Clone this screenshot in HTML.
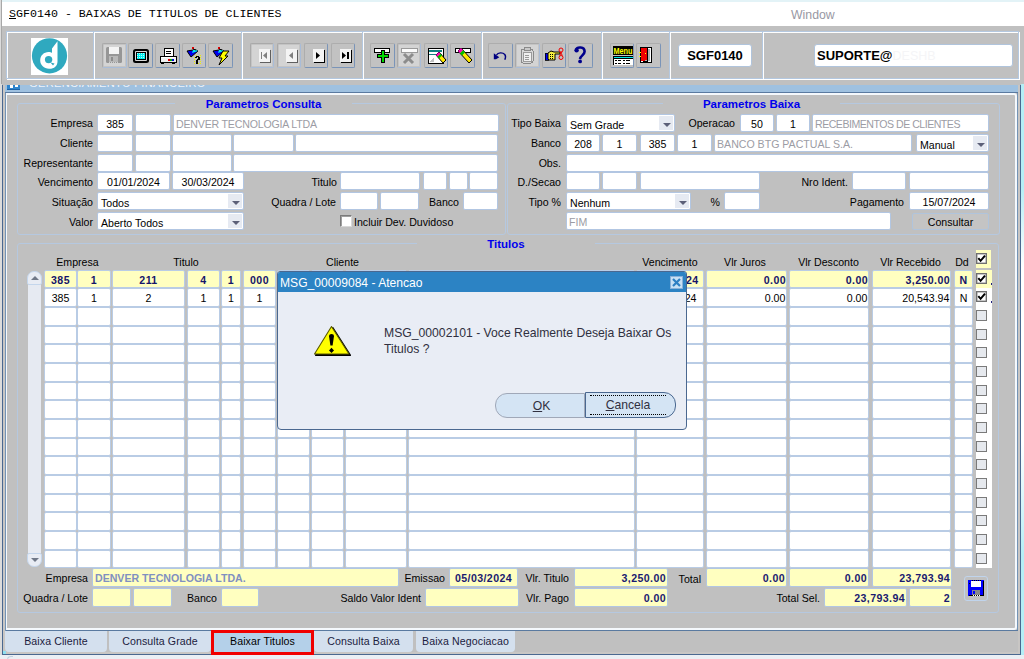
<!DOCTYPE html><html><head><meta charset="utf-8"><style>
*{margin:0;padding:0;box-sizing:border-box}
html,body{width:1024px;height:659px;overflow:hidden;background:#c0c0c0;font-family:"Liberation Sans", sans-serif;}
div{position:absolute;white-space:nowrap;}
.f{background:#fff;border:1px solid #b2c6e2;border-radius:2px;font-size:10.6px;line-height:16px;padding-top:1px;color:#000;overflow:hidden}
.fy{background:#ffffc0;border:1px solid #b2c6e2;border-radius:2px;font-size:10.6px;line-height:16px;padding-top:1px;color:#1a1a70;font-weight:bold;overflow:hidden;letter-spacing:0.4px}
.l{font-size:10.6px;line-height:16px;color:#000;text-align:right}
.g{border:1px solid #b5c8e0;border-radius:3px}
.gt{font-size:11.5px;font-weight:bold;color:#0000ee;line-height:14px;background:#c0c0c0;text-align:center}
.c{text-align:center}
.r{text-align:right}
.dd{background:#e6eaf2;}
.dd:after{content:"";position:absolute;left:4px;top:7px;border-left:4px solid transparent;border-right:4px solid transparent;border-top:4px solid #5c6078}
.tb{border:1px solid #a9bbd3;border-radius:2px;background:#c4c4c4}
.gc{background:#fff;border:1px solid #b9cce5;border-radius:2px;font-size:10.6px;line-height:16px;padding-top:1px;overflow:hidden}
.gy{background:#ffffc0;border:1px solid #b9cce5;border-radius:2px;font-size:10.6px;line-height:16px;padding-top:1px;overflow:hidden;font-weight:bold;color:#14146a;letter-spacing:0.4px}
.hd{font-size:10.6px;line-height:14px;color:#000;text-align:center}
.cb{width:11px;height:11px;border:1px solid #707070;box-shadow:inset 0 0 0 0.5px #909090;background:#fff}
.cb0{width:11px;height:11px;border:1px solid #7a7a7a;background:#e6e9ee}
.tab{background:#d4e0ee;border-radius:0 0 4px 4px;font-size:10.6px;line-height:20px;letter-spacing:0.1px;color:#202040;text-align:center}
</style></head><body><div style="left:0px;top:0px;width:1024px;height:2px;background:#e3f3f7"></div>
<div style="left:0px;top:0px;width:2px;height:659px;background:#dcdcdc"></div>
<div style="left:1px;top:0px;width:1px;height:659px;background:#a8a8a8"></div>
<div style="left:2px;top:2px;width:1022px;height:24px;background:#fff"></div>
<div style="left:9px;top:4px;width:400px;height:20px;font-family:'Liberation Mono',monospace;font-size:11.65px;line-height:20px;color:#000"><span style="text-decoration:underline">S</span>GF0140 - BAIXAS DE TITULOS DE CLIENTES</div>
<div style="left:791px;top:6px;width:60px;height:18px;font-size:12.3px;line-height:18px;color:#9898a4">Window</div>
<div style="left:6px;top:31px;width:1013px;height:48px;border:1px solid #b4c8e0;box-shadow:inset 1px 1px 0 #fff, 1px 1px 0 #fff"></div>
<div style="left:93px;top:32px;width:1px;height:47px;background:#b4c8e0;box-shadow:1px 0 0 #fff"></div>
<div style="left:241px;top:32px;width:1px;height:47px;background:#b4c8e0;box-shadow:1px 0 0 #fff"></div>
<div style="left:362px;top:32px;width:1px;height:47px;background:#b4c8e0;box-shadow:1px 0 0 #fff"></div>
<div style="left:481px;top:32px;width:1px;height:47px;background:#b4c8e0;box-shadow:1px 0 0 #fff"></div>
<div style="left:601px;top:32px;width:1px;height:47px;background:#b4c8e0;box-shadow:1px 0 0 #fff"></div>
<div style="left:669px;top:32px;width:1px;height:47px;background:#b4c8e0;box-shadow:1px 0 0 #fff"></div>
<div style="left:762px;top:32px;width:1px;height:47px;background:#b4c8e0;box-shadow:1px 0 0 #fff"></div>
<div style="left:31px;top:38px;width:37px;height:37px;"><svg width="37" height="37" viewBox="0 0 37 37" style="position:absolute;left:0;top:0"><rect width="37" height="37" fill="#fff"/><circle cx="18.5" cy="17.8" r="17.6" fill="#2fa9bf"/>
<path d="M21 10.5 L26.5 3.2 L26.5 23.5 C26.5 28 23 31 18 30.8 C13 30.6 9.3 27 9.2 22.5 C9.1 17.5 13 14 17.5 14 C19 14 20.2 14.4 21 15 Z" fill="#fff"/>
<circle cx="17.6" cy="21.6" r="3.7" fill="#2fa9bf"/><path d="M19.5 24.5 L23.5 25.5 L22 27.5 Z" fill="#2fa9bf"/></svg></div>
<div style="left:102px;top:43px;width:25px;height:25px;border:1px solid #a9a9a9;border-right-color:#a8bcd8;border-bottom-color:#a8bcd8;border-radius:2px;background:#c4c4c4"><div style="left:1px;top:1px;width:21px;height:21px;background:#d4d4d4"></div><svg width="22" height="23" style="position:absolute;left:0px;top:0px" shape-rendering="crispEdges"><rect x="3" y="3" width="16" height="16" rx="1.5" fill="#969696" shape-rendering="auto"/><rect x="6" y="3" width="10" height="7" fill="#f4f4f4"/><rect x="6" y="12" width="9" height="6" fill="#b8b8b8"/><rect x="8" y="13" width="2" height="4" fill="#8c8c8c"/><path d="M6 18h1M8 18h1M10 18h1M12 18h1M14 18h1" stroke="#d0d0d0"/></svg></div>
<div style="left:128px;top:43px;width:25px;height:25px;border:1px solid #adadad;border-right-color:#7a94b8;border-bottom-color:#7a94b8;border-radius:2px;background:#c2c2c2"><svg width="22" height="23" style="position:absolute;left:0px;top:0px" shape-rendering="crispEdges"><rect x="4" y="5" width="16" height="14" rx="2.5" fill="#000" shape-rendering="auto"/><rect x="6" y="7" width="12" height="10" rx="1" fill="#d8d8d8" shape-rendering="auto"/><rect x="7" y="8" width="10" height="8" fill="#000"/><rect x="8" y="9" width="8" height="6" fill="#00f0f0"/><path d="M8 9.5h8M8 11.5h8M8 13.5h8" stroke="#c0f8f8" stroke-dasharray="1 1"/></svg></div>
<div style="left:155px;top:43px;width:25px;height:25px;border:1px solid #adadad;border-right-color:#7a94b8;border-bottom-color:#7a94b8;border-radius:2px;background:#c2c2c2"><svg width="22" height="23" style="position:absolute;left:0px;top:0px" shape-rendering="crispEdges"><rect x="8" y="4" width="9" height="8" fill="#fff" stroke="#000"/><path d="M10 7h5M10 9h5" stroke="#000"/><rect x="4" y="12" width="16" height="6" fill="#f0f0f0" stroke="#000"/><rect x="5" y="13" width="14" height="1" fill="#fff"/><rect x="12" y="15" width="2" height="2" fill="#e00000"/><rect x="14" y="15" width="2" height="2" fill="#00b000"/><rect x="16" y="15" width="2" height="2" fill="#0000e0"/><rect x="5" y="19" width="3" height="1" fill="#000"/><rect x="16" y="19" width="3" height="1" fill="#000"/></svg></div>
<div style="left:182px;top:43px;width:24px;height:25px;border:1px solid #adadad;border-right-color:#7a94b8;border-bottom-color:#7a94b8;border-radius:2px;background:#c2c2c2"><svg width="22" height="23" style="position:absolute;left:0px;top:0px" shape-rendering="crispEdges"><path d="M4 7 L6 10 L8 13 L15 7 L13 6 L10 6 Z" fill="#0000f0" stroke="#000" stroke-width="1" shape-rendering="auto"/><path d="M9 9 L15 7 L13 6 L10 6Z" fill="#00e8f0" shape-rendering="auto"/><rect x="9" y="3" width="2" height="2" fill="#e00000"/><path d="M10 5 L13 6" stroke="#000" shape-rendering="auto"/><path d="M11 13h1M13 13h1M15 13h1M17 13h1M11 15h1M17 15h1M11 17h1M17 17h1M11 19h1M13 19h1M15 19h1M17 19h1M13 11h1M17 11h1" stroke="#f0f000"/><path d="M13 12 h3 v1 h1 v3 h-2 v2 h-2 v-2 h1 v-1 h1 v-2 h-1 v1 h-2 v-1 h1z" fill="#000"/><rect x="13" y="18" width="2" height="2" fill="#000"/></svg></div>
<div style="left:208px;top:43px;width:25px;height:25px;border:1px solid #adadad;border-right-color:#7a94b8;border-bottom-color:#7a94b8;border-radius:2px;background:#c2c2c2"><svg width="22" height="23" style="position:absolute;left:0px;top:0px" shape-rendering="crispEdges"><path d="M4 7 L6 10 L8 13 L15 7 L13 6 L10 6 Z" fill="#0000f0" stroke="#000" stroke-width="1" shape-rendering="auto"/><path d="M9 9 L15 7 L13 6 L10 6Z" fill="#00e8f0" shape-rendering="auto"/><rect x="9" y="3" width="2" height="2" fill="#e00000"/><path d="M10 5 L13 6" stroke="#000" shape-rendering="auto"/><path d="M14 7 L20 7 L16 12 L19 12 L10 21 L13 14 L10 14 Z" fill="#ffff00" stroke="#000" stroke-width="1" shape-rendering="auto"/></svg></div>
<div style="left:250px;top:43px;width:24px;height:25px;border:1px solid #a9a9a9;border-right-color:#a8bcd8;border-bottom-color:#a8bcd8;border-radius:2px;background:#c4c4c4"><div style="left:1px;top:1px;width:20px;height:21px;background:#d4d4d4"></div><svg width="22" height="23" style="position:absolute;left:1px;top:0px" shape-rendering="crispEdges"><rect x="7" y="5" width="11" height="13" fill="#f4f4f4"/><rect x="18" y="6" width="1" height="13" fill="#606060"/><rect x="8" y="18" width="11" height="1" fill="#606060"/><rect x="9" y="8" width="1" height="7" fill="#808080"/><path d="M15 8 L11 11.5 L15 15Z" fill="#808080" shape-rendering="auto"/></svg></div>
<div style="left:277px;top:43px;width:24px;height:25px;border:1px solid #a9a9a9;border-right-color:#a8bcd8;border-bottom-color:#a8bcd8;border-radius:2px;background:#c4c4c4"><div style="left:1px;top:1px;width:20px;height:21px;background:#d4d4d4"></div><svg width="22" height="23" style="position:absolute;left:1px;top:0px" shape-rendering="crispEdges"><rect x="7" y="5" width="11" height="13" fill="#f4f4f4"/><rect x="18" y="6" width="1" height="13" fill="#606060"/><rect x="8" y="18" width="11" height="1" fill="#606060"/><path d="M14 8 L10 11.5 L14 15Z" fill="#808080" shape-rendering="auto"/></svg></div>
<div style="left:304px;top:43px;width:24px;height:25px;border:1px solid #adadad;border-right-color:#7a94b8;border-bottom-color:#7a94b8;border-radius:2px;background:#c2c2c2"><svg width="22" height="23" style="position:absolute;left:1px;top:0px" shape-rendering="crispEdges"><rect x="7" y="5" width="11" height="13" fill="#f4f4f4"/><rect x="18" y="6" width="1" height="13" fill="#000"/><rect x="8" y="18" width="11" height="1" fill="#000"/><path d="M10 8 L14 11.5 L10 15Z" fill="#000" shape-rendering="auto"/></svg></div>
<div style="left:331px;top:43px;width:24px;height:25px;border:1px solid #adadad;border-right-color:#7a94b8;border-bottom-color:#7a94b8;border-radius:2px;background:#c2c2c2"><svg width="22" height="23" style="position:absolute;left:1px;top:0px" shape-rendering="crispEdges"><rect x="7" y="5" width="11" height="13" fill="#f4f4f4"/><rect x="18" y="6" width="1" height="13" fill="#000"/><rect x="8" y="18" width="11" height="1" fill="#000"/><path d="M9 8 L13 11.5 L9 15Z" fill="#000" shape-rendering="auto"/><rect x="14" y="8" width="2" height="7" fill="#000"/></svg></div>
<div style="left:370px;top:43px;width:25px;height:25px;border:1px solid #adadad;border-right-color:#7a94b8;border-bottom-color:#7a94b8;border-radius:2px;background:#c2c2c2"><svg width="22" height="23" style="position:absolute;left:0px;top:0px" shape-rendering="crispEdges"><rect x="3.5" y="4.5" width="15" height="4" fill="#fff" stroke="#000"/><path d="M10 6 h3 v4 h4 v3 h-4 v5 h-3 v-5 h-4 v-3 h4z" fill="#00d800" stroke="#000"/></svg></div>
<div style="left:397px;top:43px;width:24px;height:25px;border:1px solid #a9a9a9;border-right-color:#a8bcd8;border-bottom-color:#a8bcd8;border-radius:2px;background:#c4c4c4"><div style="left:1px;top:1px;width:20px;height:21px;background:#d4d4d4"></div><svg width="22" height="23" style="position:absolute;left:0px;top:0px" shape-rendering="crispEdges"><rect x="3" y="4" width="16" height="4" fill="#fafafa" stroke="#9a9a9a"/><path d="M6 10 L15 19 M15 10 L6 19" stroke="#8c8c8c" stroke-width="3" shape-rendering="auto"/></svg></div>
<div style="left:424px;top:43px;width:24px;height:25px;border:1px solid #adadad;border-right-color:#7a94b8;border-bottom-color:#7a94b8;border-radius:2px;background:#c2c2c2"><svg width="22" height="23" style="position:absolute;left:0px;top:0px" shape-rendering="crispEdges"><rect x="3" y="4" width="15" height="15" fill="#fff" stroke="#000"/><rect x="4" y="6" width="13" height="2" fill="#108080"/><rect x="4" y="10" width="13" height="1" fill="#108080"/><path d="M4 18 L9 13 L9 18Z" fill="#c0c0c0"/><path d="M11 11 L14 8 L21 16 L18 19 Z" fill="#ffe800" stroke="#000" shape-rendering="auto"/><path d="M11 11 L14 8 L15.5 9.7 L12.5 12.7Z" fill="#ff00c0" shape-rendering="auto"/><path d="M12.5 12.7 L15.5 9.7 L17 11.4 L14 14.4Z" fill="#00c000" shape-rendering="auto"/></svg></div>
<div style="left:450px;top:43px;width:25px;height:25px;border:1px solid #adadad;border-right-color:#7a94b8;border-bottom-color:#7a94b8;border-radius:2px;background:#c2c2c2"><svg width="22" height="23" style="position:absolute;left:0px;top:0px" shape-rendering="crispEdges"><rect x="4" y="4" width="15" height="4" fill="#fff" stroke="#000"/><path d="M7 7 L10 4 L21 16 L18 19 Z" fill="#ffe800" stroke="#000" shape-rendering="auto"/><path d="M7 7 L10 4 L12 6.2 L9 9.2Z" fill="#ff00c0" shape-rendering="auto"/><path d="M9 9.2 L12 6.2 L14 8.4 L11 11.4Z" fill="#00c000" shape-rendering="auto"/></svg></div>
<div style="left:488px;top:43px;width:25px;height:25px;border:1px solid #adadad;border-right-color:#7a94b8;border-bottom-color:#7a94b8;border-radius:2px;background:#c2c2c2"><svg width="22" height="23" style="position:absolute;left:0px;top:0px" shape-rendering="crispEdges"><path d="M7.5 11 C9 8.5 13.5 8 15.8 10.5 C17 12 16.6 14 15.8 15.8" fill="none" stroke="#000080" stroke-width="1.4" shape-rendering="auto"/><path d="M4.8 9.3 L10.3 13.2 L7 15.2 L4.8 15.2 Z" fill="#000080" shape-rendering="auto"/></svg></div>
<div style="left:515px;top:43px;width:25px;height:25px;border:1px solid #a9a9a9;border-right-color:#a8bcd8;border-bottom-color:#a8bcd8;border-radius:2px;background:#c4c4c4"><div style="left:1px;top:1px;width:21px;height:21px;background:#d4d4d4"></div><svg width="22" height="23" style="position:absolute;left:0px;top:0px" shape-rendering="crispEdges"><rect x="5" y="5" width="12" height="14" rx="2" fill="#d8d8d8" stroke="#8a8a8a"/><rect x="8" y="3" width="6" height="3" fill="#c8c8c8" stroke="#8a8a8a"/><rect x="7" y="8" width="8" height="9" fill="#f0f0f0" stroke="#9a9a9a"/><path d="M9 11h4M9 13h4M9 15h4" stroke="#9a9a9a"/></svg></div>
<div style="left:542px;top:43px;width:24px;height:25px;border:1px solid #adadad;border-right-color:#7a94b8;border-bottom-color:#7a94b8;border-radius:2px;background:#c2c2c2"><svg width="22" height="23" style="position:absolute;left:0px;top:0px" shape-rendering="crispEdges"><rect x="2" y="9" width="3" height="7" fill="#0000f0" stroke="#000" stroke-width="0.8"/><path d="M5 9 L8 7 L11 8 L17 8 L17 10 L12 10 L12 16 L6 16 L5 15 Z" fill="#f8f040" stroke="#000" stroke-width="1" shape-rendering="auto"/><path d="M7 10.5h4M7 12.5h4M7 14.5h4" stroke="#000" stroke-dasharray="1 1"/><circle cx="18" cy="6" r="2" fill="none" stroke="#f00000" shape-rendering="auto"/><circle cx="18" cy="13.5" r="2" fill="none" stroke="#f00000" shape-rendering="auto"/><path d="M17 8 L19.5 11.5 M19 8 L16.5 11.5" stroke="#f00000" shape-rendering="auto"/></svg></div>
<div style="left:568px;top:43px;width:25px;height:25px;border:1px solid #adadad;border-right-color:#7a94b8;border-bottom-color:#7a94b8;border-radius:2px;background:#c2c2c2"><svg width="22" height="23" style="position:absolute;left:0px;top:0px" shape-rendering="crispEdges"><circle cx="7.6" cy="6.2" r="2.2" fill="#00008c" shape-rendering="auto"/><path d="M7.2 5.8 C8 2.6 15.6 2.4 15.6 7.6 C15.6 11 11.4 11.6 11 15" fill="none" stroke="#00008c" stroke-width="2.6" shape-rendering="auto"/><circle cx="11.1" cy="17.4" r="1.9" fill="#00008c" shape-rendering="auto"/></svg></div>
<div style="left:610px;top:43px;width:24px;height:25px;border:1px solid #adadad;border-right-color:#7a94b8;border-bottom-color:#7a94b8;border-radius:2px;background:#c2c2c2"><svg width="22" height="23" style="position:absolute;left:0px;top:0px" shape-rendering="crispEdges"><rect x="2" y="2" width="20" height="9" fill="#000"/><text x="2.5" y="9.6" font-family="Liberation Sans" font-weight="bold" font-size="9.5" fill="#ffff00" textLength="19" lengthAdjust="spacingAndGlyphs" shape-rendering="auto">Menu</text><rect x="2" y="12" width="20" height="1" fill="#000"/><rect x="3" y="13" width="19" height="1" fill="#00e8e8"/><rect x="2" y="14" width="20" height="1" fill="#000"/><rect x="3" y="15" width="19" height="6" fill="#fff"/><rect x="2" y="13" width="1" height="8" fill="#000"/><path d="M4 16.5h2M7 16.5h3M12 16.5h2M15 16.5h4M4 19.5h2M7 19.5h3M12 19.5h2M15 19.5h4" stroke="#000"/></svg></div>
<div style="left:636px;top:43px;width:25px;height:25px;border:1px solid #adadad;border-right-color:#7a94b8;border-bottom-color:#7a94b8;border-radius:2px;background:#c2c2c2"><svg width="22" height="23" style="position:absolute;left:0px;top:0px" shape-rendering="crispEdges"><rect x="3" y="3" width="12" height="16" fill="#000"/><rect x="4" y="4" width="10" height="14" fill="#fff"/><rect x="11" y="5" width="2" height="12" fill="#b0b0b0"/><rect x="6" y="16" width="7" height="1" fill="#b0b0b0"/><path d="M4 4 L10 4 L10 16 L6 17 L4 17 Z" fill="#f00000"/><rect x="10" y="4" width="1" height="13" fill="#000"/><rect x="6" y="17" width="5" height="1" fill="#000"/><rect x="2" y="8" width="2" height="1" fill="#ffff00"/><rect x="2" y="12" width="2" height="1" fill="#ffff00"/><rect x="8" y="9" width="1" height="1" fill="#ffff00"/></svg></div>
<div style="left:678px;top:44px;width:74px;height:23px;background:#fff;border:1px solid #b0c4dc;border-radius:3px;font-size:13px;font-weight:bold;line-height:21px;text-align:center;color:#000">SGF0140</div>
<div style="left:814px;top:44px;width:199px;height:23px;background:#fff;border:1px solid #b0c4dc;border-radius:3px;font-size:13px;font-weight:bold;line-height:21px;padding-left:2px;color:#000">SUPORTE@<span style="color:#f5f5f7;font-weight:normal;font-size:12.5px">DESHB</span></div>
<div style="left:3px;top:85px;width:1017px;height:7px;background:#9fc1e0;overflow:hidden"><div style="left:26px;top:-9px;font-size:11.6px;line-height:14px;color:#eef3f9;letter-spacing:0.3px;transform:scaleX(0.96);transform-origin:0 0">GERENCIAMENTO FINANCEIRO</div><div style="left:4px;top:0px;width:13px;height:5px;background:#2e84cc;border-bottom:1px solid #1c64a8"><div style="left:3px;top:0;width:3px;height:3px;background:#fff"></div><div style="left:8px;top:0;width:3px;height:2px;background:#fff"></div></div></div>
<div style="left:3px;top:92px;width:1017px;height:1px;background:#5a7aa0"></div>
<div style="left:0px;top:84px;width:2px;height:575px;background:#dcdcdc"></div>
<div style="left:2px;top:85px;width:1px;height:570px;background:#4a6890"></div>
<div style="left:3px;top:85px;width:2px;height:567px;background:#c8c6c4"></div>
<div style="left:1018px;top:85px;width:2px;height:567px;background:#c8c6c4"></div>
<div style="left:1020px;top:85px;width:1px;height:570px;background:#4a6890"></div>
<div style="left:1021px;top:84px;width:3px;height:575px;background:linear-gradient(#b4eef6 0%,#b4eef6 18%,#fff 32%,#fff 62%,#b4eef6 82%,#b4eef6 100%)"></div>
<div style="left:3px;top:652px;width:1017px;height:2px;background:#c8c6c4"></div>
<div style="left:2px;top:654px;width:1019px;height:1px;background:#4a6890"></div>
<div style="left:3px;top:651px;width:3px;height:3px;background:#90e0f0"></div>
<div style="left:0px;top:655px;width:1024px;height:4px;background:#ebeff4"></div>
<div style="left:7px;top:656px;width:6px;height:4px;border-top:1px solid #c0d0e0;border-left:1px solid #c0d0e0;border-radius:5px 0 0 0"></div>
<div style="left:5px;top:93px;width:1013px;height:538px;border:1px solid #7393b5;border-top:none"></div>
<div style="left:6px;top:93px;width:1011px;height:537px;border:2px solid #f4f8fc;border-left-width:1px;border-radius:0 3px 3px 0"></div>
<div style="left:6px;top:630px;width:1012px;height:1px;background:#5a7aa0"></div>
<div class="g" style="left:17px;top:103px;width:489px;height:132px;"></div>
<div class="gt" style="left:175px;top:97px;width:177px;height:14px;">Parametros Consulta</div>
<div class="g" style="left:507px;top:103px;width:493px;height:132px;"></div>
<div class="gt" style="left:663px;top:97px;width:177px;height:14px;">Parametros Baixa</div>
<div class="l" style="left:-57px;top:115px;width:150px;height:16px;">Empresa</div>
<div class="f" style="left:97px;top:114px;width:36px;height:18px;text-align:center;">385</div>
<div class="f" style="left:135px;top:114px;width:36px;height:18px;text-align:center;"></div>
<div class="f" style="left:173px;top:114px;width:326px;height:18px;text-align:left;padding-left:3px;color:#9c9ca4;letter-spacing:-0.19px;padding-left:2px">DENVER TECNOLOGIA LTDA</div>
<div class="l" style="left:-57px;top:135px;width:150px;height:16px;">Cliente</div>
<div class="f" style="left:97px;top:134px;width:36px;height:18px;text-align:center;"></div>
<div class="f" style="left:135px;top:134px;width:36px;height:18px;text-align:center;"></div>
<div class="f" style="left:172px;top:134px;width:60px;height:18px;text-align:center;"></div>
<div class="f" style="left:233px;top:134px;width:61px;height:18px;text-align:center;"></div>
<div class="f" style="left:295px;top:134px;width:203px;height:18px;text-align:center;"></div>
<div class="l" style="left:-57px;top:155px;width:150px;height:16px;">Representante</div>
<div class="f" style="left:97px;top:154px;width:36px;height:18px;text-align:center;"></div>
<div class="f" style="left:135px;top:154px;width:36px;height:18px;text-align:center;"></div>
<div class="f" style="left:172px;top:154px;width:60px;height:18px;text-align:center;"></div>
<div class="f" style="left:233px;top:154px;width:265px;height:18px;text-align:center;"></div>
<div class="l" style="left:-57px;top:174px;width:150px;height:16px;">Vencimento</div>
<div class="f" style="left:97px;top:172px;width:73px;height:18px;text-align:center;">01/01/2024</div>
<div class="f" style="left:172px;top:172px;width:72px;height:18px;text-align:center;">30/03/2024</div>
<div class="l" style="left:187px;top:174px;width:150px;height:16px;">Titulo</div>
<div class="f" style="left:340px;top:172px;width:80px;height:18px;text-align:center;"></div>
<div class="f" style="left:423px;top:172px;width:24px;height:18px;text-align:center;"></div>
<div class="f" style="left:449px;top:172px;width:19px;height:18px;text-align:center;"></div>
<div class="f" style="left:469px;top:172px;width:29px;height:18px;text-align:center;"></div>
<div class="l" style="left:-57px;top:194px;width:150px;height:16px;">Situação</div>
<div class="f" style="left:97px;top:192px;width:147px;height:18px;text-align:left;padding-left:3px;padding-top:2px">Todos<div class="dd" style="left:130px;top:1px;width:14px;height:14px"></div></div>
<div class="l" style="left:186px;top:194px;width:150px;height:16px;">Quadra / Lote</div>
<div class="f" style="left:340px;top:192px;width:38px;height:18px;text-align:center;"></div>
<div class="f" style="left:380px;top:192px;width:39px;height:18px;text-align:center;"></div>
<div class="l" style="left:309px;top:194px;width:150px;height:16px;">Banco</div>
<div class="f" style="left:463px;top:192px;width:35px;height:18px;text-align:center;"></div>
<div class="l" style="left:-57px;top:214px;width:150px;height:16px;">Valor</div>
<div class="f" style="left:97px;top:212px;width:147px;height:18px;text-align:left;padding-left:3px;padding-top:2px">Aberto Todos<div class="dd" style="left:130px;top:1px;width:14px;height:14px"></div></div>
<div style="left:340px;top:215px;width:12px;height:12px;background:#fff;border:1px solid #7c7c7c;border-right-color:#d8d8d8;border-bottom-color:#d8d8d8;box-shadow:inset 1px 1px 0 #a0a0a0"></div>
<div class="l" style="left:354px;top:214px;text-align:left">Incluir Dev. Duvidoso</div>
<div class="l" style="left:411px;top:115px;width:150px;height:16px;">Tipo Baixa</div>
<div class="f" style="left:566px;top:114px;width:109px;height:18px;text-align:left;padding-left:3px;padding-top:2px">Sem Grade<div class="dd" style="left:92px;top:1px;width:14px;height:14px"></div></div>
<div class="l" style="left:585px;top:115px;width:150px;height:16px;">Operacao</div>
<div class="f" style="left:740px;top:114px;width:34px;height:18px;text-align:center;">50</div>
<div class="f" style="left:776px;top:114px;width:34px;height:18px;text-align:center;">1</div>
<div class="f" style="left:812px;top:114px;width:177px;height:18px;text-align:left;padding-left:3px;color:#9c9ca4;letter-spacing:-0.5px;padding-left:2px">RECEBIMENTOS DE CLIENTES</div>
<div class="l" style="left:411px;top:135px;width:150px;height:16px;">Banco</div>
<div class="f" style="left:566px;top:134px;width:34px;height:18px;text-align:center;">208</div>
<div class="f" style="left:602px;top:134px;width:35px;height:18px;text-align:center;">1</div>
<div class="f" style="left:640px;top:134px;width:35px;height:18px;text-align:center;">385</div>
<div class="f" style="left:677px;top:134px;width:35px;height:18px;text-align:center;">1</div>
<div class="f" style="left:714px;top:134px;width:198px;height:18px;text-align:left;padding-left:3px;color:#9c9ca4;padding-left:2px">BANCO BTG PACTUAL S.A.</div>
<div class="f" style="left:916px;top:134px;width:73px;height:18px;text-align:left;padding-left:3px;padding-top:2px">Manual<div class="dd" style="left:56px;top:1px;width:14px;height:14px"></div></div>
<div class="l" style="left:411px;top:155px;width:150px;height:16px;">Obs.</div>
<div class="f" style="left:566px;top:154px;width:423px;height:18px;text-align:center;"></div>
<div class="l" style="left:411px;top:174px;width:150px;height:16px;">D./Secao</div>
<div class="f" style="left:566px;top:172px;width:34px;height:18px;text-align:center;"></div>
<div class="f" style="left:602px;top:172px;width:35px;height:18px;text-align:center;"></div>
<div class="f" style="left:640px;top:172px;width:120px;height:18px;text-align:center;"></div>
<div class="l" style="left:698px;top:174px;width:150px;height:16px;">Nro Ident.</div>
<div class="f" style="left:852px;top:172px;width:54px;height:18px;text-align:center;"></div>
<div class="f" style="left:909px;top:172px;width:80px;height:18px;text-align:center;"></div>
<div class="l" style="left:411px;top:194px;width:150px;height:16px;">Tipo %</div>
<div class="f" style="left:566px;top:192px;width:125px;height:18px;text-align:left;padding-left:3px;padding-top:2px">Nenhum<div class="dd" style="left:108px;top:1px;width:14px;height:14px"></div></div>
<div class="l" style="left:570px;top:194px;width:150px;height:16px;">%</div>
<div class="f" style="left:724px;top:192px;width:36px;height:18px;text-align:center;"></div>
<div class="l" style="left:754px;top:194px;width:150px;height:16px;">Pagamento</div>
<div class="f" style="left:909px;top:192px;width:80px;height:18px;text-align:center;">15/07/2024</div>
<div class="f" style="left:566px;top:212px;width:325px;height:18px;text-align:left;padding-left:3px;color:#9c9ca4;padding-left:2px">FIM</div>
<div class="l" style="left:912px;top:213px;width:77px;height:17px;background:#c4c4c4;border:1px solid #b0c4dc;border-radius:2px;text-align:center">Consultar</div>
<div class="g" style="left:17px;top:243px;width:982px;height:370px;"></div>
<div class="gt" style="left:417px;top:237px;width:178px;height:14px;">Titulos</div>
<div class="hd" style="left:47px;top:255px;width:61px;height:14px;">Empresa</div>
<div class="hd" style="left:164px;top:255px;width:44px;height:14px;">Titulo</div>
<div class="hd" style="left:317px;top:255px;width:51px;height:14px;">Cliente</div>
<div class="hd" style="left:632px;top:255px;width:76px;height:14px;">Vencimento</div>
<div class="hd" style="left:713px;top:255px;width:64px;height:14px;">Vlr Juros</div>
<div class="hd" style="left:787px;top:255px;width:83px;height:14px;">Vlr Desconto</div>
<div class="hd" style="left:870px;top:255px;width:81px;height:14px;">Vlr Recebido</div>
<div class="hd" style="left:946px;top:255px;width:32px;height:14px;">Dd</div>
<div class="gy" style="left:44px;top:270px;width:33px;height:18px;text-align:center">385</div>
<div class="gy" style="left:77px;top:270px;width:34px;height:18px;text-align:center">1</div>
<div class="gy" style="left:112px;top:270px;width:73px;height:18px;text-align:center">211</div>
<div class="gy" style="left:187px;top:270px;width:33px;height:18px;text-align:center">4</div>
<div class="gy" style="left:221px;top:270px;width:20px;height:18px;text-align:center">1</div>
<div class="gy" style="left:243px;top:270px;width:33px;height:18px;text-align:center">000</div>
<div class="gy" style="left:277px;top:270px;width:33px;height:18px;text-align:center"></div>
<div class="gy" style="left:311px;top:270px;width:33px;height:18px;text-align:center"></div>
<div class="gy" style="left:345px;top:270px;width:62px;height:18px;text-align:center"></div>
<div class="gy" style="left:408px;top:270px;width:227px;height:18px;text-align:left;padding-left:3px"></div>
<div class="gy" style="left:636px;top:270px;width:68px;height:18px;text-align:center">05/03/2024</div>
<div class="gy" style="left:706px;top:270px;width:81px;height:18px;text-align:right;padding-right:0;margin-right:-0.4px">0.00</div>
<div class="gy" style="left:789px;top:270px;width:80px;height:18px;text-align:right;padding-right:0;margin-right:-0.4px">0.00</div>
<div class="gy" style="left:872px;top:270px;width:79px;height:18px;text-align:right;padding-right:0;margin-right:-0.4px">3,250.00</div>
<div class="gy" style="left:954px;top:270px;width:19px;height:18px;text-align:center">N</div>
<div style="left:976px;top:270px;width:16px;height:18px;background:#ffffc0"></div>
<div class="cb" style="left:976px;top:273px;width:11px;height:11px;"><svg width="9" height="9" style="position:absolute;left:0;top:0"><path d="M1.3 4.2 L3.6 6.8 L8 1.6" fill="none" stroke="#000" stroke-width="2"/></svg></div>
<div style="left:991px;top:283px;width:1px;height:2px;background:#202080"></div>
<div class="gc" style="left:44px;top:288px;width:33px;height:19px;text-align:center">385</div>
<div class="gc" style="left:77px;top:288px;width:34px;height:19px;text-align:center">1</div>
<div class="gc" style="left:112px;top:288px;width:73px;height:19px;text-align:center">2</div>
<div class="gc" style="left:187px;top:288px;width:33px;height:19px;text-align:center">1</div>
<div class="gc" style="left:221px;top:288px;width:20px;height:19px;text-align:center">1</div>
<div class="gc" style="left:243px;top:288px;width:33px;height:19px;text-align:center">1</div>
<div class="gc" style="left:277px;top:288px;width:33px;height:19px;text-align:center"></div>
<div class="gc" style="left:311px;top:288px;width:33px;height:19px;text-align:center"></div>
<div class="gc" style="left:345px;top:288px;width:62px;height:19px;text-align:center"></div>
<div class="gc" style="left:408px;top:288px;width:227px;height:19px;text-align:left;padding-left:3px"></div>
<div class="gc" style="left:636px;top:288px;width:68px;height:19px;text-align:center">05/03/2024</div>
<div class="gc" style="left:706px;top:288px;width:81px;height:19px;text-align:right;padding-right:0.6px">0.00</div>
<div class="gc" style="left:789px;top:288px;width:80px;height:19px;text-align:right;padding-right:0.6px">0.00</div>
<div class="gc" style="left:872px;top:288px;width:79px;height:19px;text-align:right;padding-right:0.6px">20,543.94</div>
<div class="gc" style="left:954px;top:288px;width:19px;height:19px;text-align:center">N</div>
<div style="left:976px;top:288px;width:16px;height:19px;background:#fff"></div>
<div class="cb" style="left:976px;top:291px;width:11px;height:11px;"><svg width="9" height="9" style="position:absolute;left:0;top:0"><path d="M1.3 4.2 L3.6 6.8 L8 1.6" fill="none" stroke="#000" stroke-width="2"/></svg></div>
<div style="left:991px;top:301px;width:1px;height:2px;background:#202080"></div>
<div class="gc" style="left:44px;top:307px;width:33px;height:19px;text-align:center"></div>
<div class="gc" style="left:77px;top:307px;width:34px;height:19px;text-align:center"></div>
<div class="gc" style="left:112px;top:307px;width:73px;height:19px;text-align:center"></div>
<div class="gc" style="left:187px;top:307px;width:33px;height:19px;text-align:center"></div>
<div class="gc" style="left:221px;top:307px;width:20px;height:19px;text-align:center"></div>
<div class="gc" style="left:243px;top:307px;width:33px;height:19px;text-align:center"></div>
<div class="gc" style="left:277px;top:307px;width:33px;height:19px;text-align:center"></div>
<div class="gc" style="left:311px;top:307px;width:33px;height:19px;text-align:center"></div>
<div class="gc" style="left:345px;top:307px;width:62px;height:19px;text-align:center"></div>
<div class="gc" style="left:408px;top:307px;width:227px;height:19px;text-align:left;padding-left:3px"></div>
<div class="gc" style="left:636px;top:307px;width:68px;height:19px;text-align:center"></div>
<div class="gc" style="left:706px;top:307px;width:81px;height:19px;text-align:right;padding-right:0.6px"></div>
<div class="gc" style="left:789px;top:307px;width:80px;height:19px;text-align:right;padding-right:0.6px"></div>
<div class="gc" style="left:872px;top:307px;width:79px;height:19px;text-align:right;padding-right:0.6px"></div>
<div class="gc" style="left:954px;top:307px;width:19px;height:19px;text-align:center"></div>
<div style="left:976px;top:307px;width:16px;height:19px;background:#fff"></div>
<div class="cb0" style="left:976px;top:310px;width:11px;height:11px;"></div>
<div class="gc" style="left:44px;top:326px;width:33px;height:18px;text-align:center"></div>
<div class="gc" style="left:77px;top:326px;width:34px;height:18px;text-align:center"></div>
<div class="gc" style="left:112px;top:326px;width:73px;height:18px;text-align:center"></div>
<div class="gc" style="left:187px;top:326px;width:33px;height:18px;text-align:center"></div>
<div class="gc" style="left:221px;top:326px;width:20px;height:18px;text-align:center"></div>
<div class="gc" style="left:243px;top:326px;width:33px;height:18px;text-align:center"></div>
<div class="gc" style="left:277px;top:326px;width:33px;height:18px;text-align:center"></div>
<div class="gc" style="left:311px;top:326px;width:33px;height:18px;text-align:center"></div>
<div class="gc" style="left:345px;top:326px;width:62px;height:18px;text-align:center"></div>
<div class="gc" style="left:408px;top:326px;width:227px;height:18px;text-align:left;padding-left:3px"></div>
<div class="gc" style="left:636px;top:326px;width:68px;height:18px;text-align:center"></div>
<div class="gc" style="left:706px;top:326px;width:81px;height:18px;text-align:right;padding-right:0.6px"></div>
<div class="gc" style="left:789px;top:326px;width:80px;height:18px;text-align:right;padding-right:0.6px"></div>
<div class="gc" style="left:872px;top:326px;width:79px;height:18px;text-align:right;padding-right:0.6px"></div>
<div class="gc" style="left:954px;top:326px;width:19px;height:18px;text-align:center"></div>
<div style="left:976px;top:326px;width:16px;height:18px;background:#fff"></div>
<div class="cb0" style="left:976px;top:329px;width:11px;height:11px;"></div>
<div class="gc" style="left:44px;top:344px;width:33px;height:19px;text-align:center"></div>
<div class="gc" style="left:77px;top:344px;width:34px;height:19px;text-align:center"></div>
<div class="gc" style="left:112px;top:344px;width:73px;height:19px;text-align:center"></div>
<div class="gc" style="left:187px;top:344px;width:33px;height:19px;text-align:center"></div>
<div class="gc" style="left:221px;top:344px;width:20px;height:19px;text-align:center"></div>
<div class="gc" style="left:243px;top:344px;width:33px;height:19px;text-align:center"></div>
<div class="gc" style="left:277px;top:344px;width:33px;height:19px;text-align:center"></div>
<div class="gc" style="left:311px;top:344px;width:33px;height:19px;text-align:center"></div>
<div class="gc" style="left:345px;top:344px;width:62px;height:19px;text-align:center"></div>
<div class="gc" style="left:408px;top:344px;width:227px;height:19px;text-align:left;padding-left:3px"></div>
<div class="gc" style="left:636px;top:344px;width:68px;height:19px;text-align:center"></div>
<div class="gc" style="left:706px;top:344px;width:81px;height:19px;text-align:right;padding-right:0.6px"></div>
<div class="gc" style="left:789px;top:344px;width:80px;height:19px;text-align:right;padding-right:0.6px"></div>
<div class="gc" style="left:872px;top:344px;width:79px;height:19px;text-align:right;padding-right:0.6px"></div>
<div class="gc" style="left:954px;top:344px;width:19px;height:19px;text-align:center"></div>
<div style="left:976px;top:344px;width:16px;height:19px;background:#fff"></div>
<div class="cb0" style="left:976px;top:347px;width:11px;height:11px;"></div>
<div class="gc" style="left:44px;top:363px;width:33px;height:19px;text-align:center"></div>
<div class="gc" style="left:77px;top:363px;width:34px;height:19px;text-align:center"></div>
<div class="gc" style="left:112px;top:363px;width:73px;height:19px;text-align:center"></div>
<div class="gc" style="left:187px;top:363px;width:33px;height:19px;text-align:center"></div>
<div class="gc" style="left:221px;top:363px;width:20px;height:19px;text-align:center"></div>
<div class="gc" style="left:243px;top:363px;width:33px;height:19px;text-align:center"></div>
<div class="gc" style="left:277px;top:363px;width:33px;height:19px;text-align:center"></div>
<div class="gc" style="left:311px;top:363px;width:33px;height:19px;text-align:center"></div>
<div class="gc" style="left:345px;top:363px;width:62px;height:19px;text-align:center"></div>
<div class="gc" style="left:408px;top:363px;width:227px;height:19px;text-align:left;padding-left:3px"></div>
<div class="gc" style="left:636px;top:363px;width:68px;height:19px;text-align:center"></div>
<div class="gc" style="left:706px;top:363px;width:81px;height:19px;text-align:right;padding-right:0.6px"></div>
<div class="gc" style="left:789px;top:363px;width:80px;height:19px;text-align:right;padding-right:0.6px"></div>
<div class="gc" style="left:872px;top:363px;width:79px;height:19px;text-align:right;padding-right:0.6px"></div>
<div class="gc" style="left:954px;top:363px;width:19px;height:19px;text-align:center"></div>
<div style="left:976px;top:363px;width:16px;height:19px;background:#fff"></div>
<div class="cb0" style="left:976px;top:366px;width:11px;height:11px;"></div>
<div class="gc" style="left:44px;top:382px;width:33px;height:18px;text-align:center"></div>
<div class="gc" style="left:77px;top:382px;width:34px;height:18px;text-align:center"></div>
<div class="gc" style="left:112px;top:382px;width:73px;height:18px;text-align:center"></div>
<div class="gc" style="left:187px;top:382px;width:33px;height:18px;text-align:center"></div>
<div class="gc" style="left:221px;top:382px;width:20px;height:18px;text-align:center"></div>
<div class="gc" style="left:243px;top:382px;width:33px;height:18px;text-align:center"></div>
<div class="gc" style="left:277px;top:382px;width:33px;height:18px;text-align:center"></div>
<div class="gc" style="left:311px;top:382px;width:33px;height:18px;text-align:center"></div>
<div class="gc" style="left:345px;top:382px;width:62px;height:18px;text-align:center"></div>
<div class="gc" style="left:408px;top:382px;width:227px;height:18px;text-align:left;padding-left:3px"></div>
<div class="gc" style="left:636px;top:382px;width:68px;height:18px;text-align:center"></div>
<div class="gc" style="left:706px;top:382px;width:81px;height:18px;text-align:right;padding-right:0.6px"></div>
<div class="gc" style="left:789px;top:382px;width:80px;height:18px;text-align:right;padding-right:0.6px"></div>
<div class="gc" style="left:872px;top:382px;width:79px;height:18px;text-align:right;padding-right:0.6px"></div>
<div class="gc" style="left:954px;top:382px;width:19px;height:18px;text-align:center"></div>
<div style="left:976px;top:382px;width:16px;height:18px;background:#fff"></div>
<div class="cb0" style="left:976px;top:385px;width:11px;height:11px;"></div>
<div class="gc" style="left:44px;top:400px;width:33px;height:19px;text-align:center"></div>
<div class="gc" style="left:77px;top:400px;width:34px;height:19px;text-align:center"></div>
<div class="gc" style="left:112px;top:400px;width:73px;height:19px;text-align:center"></div>
<div class="gc" style="left:187px;top:400px;width:33px;height:19px;text-align:center"></div>
<div class="gc" style="left:221px;top:400px;width:20px;height:19px;text-align:center"></div>
<div class="gc" style="left:243px;top:400px;width:33px;height:19px;text-align:center"></div>
<div class="gc" style="left:277px;top:400px;width:33px;height:19px;text-align:center"></div>
<div class="gc" style="left:311px;top:400px;width:33px;height:19px;text-align:center"></div>
<div class="gc" style="left:345px;top:400px;width:62px;height:19px;text-align:center"></div>
<div class="gc" style="left:408px;top:400px;width:227px;height:19px;text-align:left;padding-left:3px"></div>
<div class="gc" style="left:636px;top:400px;width:68px;height:19px;text-align:center"></div>
<div class="gc" style="left:706px;top:400px;width:81px;height:19px;text-align:right;padding-right:0.6px"></div>
<div class="gc" style="left:789px;top:400px;width:80px;height:19px;text-align:right;padding-right:0.6px"></div>
<div class="gc" style="left:872px;top:400px;width:79px;height:19px;text-align:right;padding-right:0.6px"></div>
<div class="gc" style="left:954px;top:400px;width:19px;height:19px;text-align:center"></div>
<div style="left:976px;top:400px;width:16px;height:19px;background:#fff"></div>
<div class="cb0" style="left:976px;top:403px;width:11px;height:11px;"></div>
<div class="gc" style="left:44px;top:419px;width:33px;height:19px;text-align:center"></div>
<div class="gc" style="left:77px;top:419px;width:34px;height:19px;text-align:center"></div>
<div class="gc" style="left:112px;top:419px;width:73px;height:19px;text-align:center"></div>
<div class="gc" style="left:187px;top:419px;width:33px;height:19px;text-align:center"></div>
<div class="gc" style="left:221px;top:419px;width:20px;height:19px;text-align:center"></div>
<div class="gc" style="left:243px;top:419px;width:33px;height:19px;text-align:center"></div>
<div class="gc" style="left:277px;top:419px;width:33px;height:19px;text-align:center"></div>
<div class="gc" style="left:311px;top:419px;width:33px;height:19px;text-align:center"></div>
<div class="gc" style="left:345px;top:419px;width:62px;height:19px;text-align:center"></div>
<div class="gc" style="left:408px;top:419px;width:227px;height:19px;text-align:left;padding-left:3px"></div>
<div class="gc" style="left:636px;top:419px;width:68px;height:19px;text-align:center"></div>
<div class="gc" style="left:706px;top:419px;width:81px;height:19px;text-align:right;padding-right:0.6px"></div>
<div class="gc" style="left:789px;top:419px;width:80px;height:19px;text-align:right;padding-right:0.6px"></div>
<div class="gc" style="left:872px;top:419px;width:79px;height:19px;text-align:right;padding-right:0.6px"></div>
<div class="gc" style="left:954px;top:419px;width:19px;height:19px;text-align:center"></div>
<div style="left:976px;top:419px;width:16px;height:19px;background:#fff"></div>
<div class="cb0" style="left:976px;top:422px;width:11px;height:11px;"></div>
<div class="gc" style="left:44px;top:438px;width:33px;height:18px;text-align:center"></div>
<div class="gc" style="left:77px;top:438px;width:34px;height:18px;text-align:center"></div>
<div class="gc" style="left:112px;top:438px;width:73px;height:18px;text-align:center"></div>
<div class="gc" style="left:187px;top:438px;width:33px;height:18px;text-align:center"></div>
<div class="gc" style="left:221px;top:438px;width:20px;height:18px;text-align:center"></div>
<div class="gc" style="left:243px;top:438px;width:33px;height:18px;text-align:center"></div>
<div class="gc" style="left:277px;top:438px;width:33px;height:18px;text-align:center"></div>
<div class="gc" style="left:311px;top:438px;width:33px;height:18px;text-align:center"></div>
<div class="gc" style="left:345px;top:438px;width:62px;height:18px;text-align:center"></div>
<div class="gc" style="left:408px;top:438px;width:227px;height:18px;text-align:left;padding-left:3px"></div>
<div class="gc" style="left:636px;top:438px;width:68px;height:18px;text-align:center"></div>
<div class="gc" style="left:706px;top:438px;width:81px;height:18px;text-align:right;padding-right:0.6px"></div>
<div class="gc" style="left:789px;top:438px;width:80px;height:18px;text-align:right;padding-right:0.6px"></div>
<div class="gc" style="left:872px;top:438px;width:79px;height:18px;text-align:right;padding-right:0.6px"></div>
<div class="gc" style="left:954px;top:438px;width:19px;height:18px;text-align:center"></div>
<div style="left:976px;top:438px;width:16px;height:18px;background:#fff"></div>
<div class="cb0" style="left:976px;top:441px;width:11px;height:11px;"></div>
<div class="gc" style="left:44px;top:456px;width:33px;height:19px;text-align:center"></div>
<div class="gc" style="left:77px;top:456px;width:34px;height:19px;text-align:center"></div>
<div class="gc" style="left:112px;top:456px;width:73px;height:19px;text-align:center"></div>
<div class="gc" style="left:187px;top:456px;width:33px;height:19px;text-align:center"></div>
<div class="gc" style="left:221px;top:456px;width:20px;height:19px;text-align:center"></div>
<div class="gc" style="left:243px;top:456px;width:33px;height:19px;text-align:center"></div>
<div class="gc" style="left:277px;top:456px;width:33px;height:19px;text-align:center"></div>
<div class="gc" style="left:311px;top:456px;width:33px;height:19px;text-align:center"></div>
<div class="gc" style="left:345px;top:456px;width:62px;height:19px;text-align:center"></div>
<div class="gc" style="left:408px;top:456px;width:227px;height:19px;text-align:left;padding-left:3px"></div>
<div class="gc" style="left:636px;top:456px;width:68px;height:19px;text-align:center"></div>
<div class="gc" style="left:706px;top:456px;width:81px;height:19px;text-align:right;padding-right:0.6px"></div>
<div class="gc" style="left:789px;top:456px;width:80px;height:19px;text-align:right;padding-right:0.6px"></div>
<div class="gc" style="left:872px;top:456px;width:79px;height:19px;text-align:right;padding-right:0.6px"></div>
<div class="gc" style="left:954px;top:456px;width:19px;height:19px;text-align:center"></div>
<div style="left:976px;top:456px;width:16px;height:19px;background:#fff"></div>
<div class="cb0" style="left:976px;top:459px;width:11px;height:11px;"></div>
<div class="gc" style="left:44px;top:475px;width:33px;height:19px;text-align:center"></div>
<div class="gc" style="left:77px;top:475px;width:34px;height:19px;text-align:center"></div>
<div class="gc" style="left:112px;top:475px;width:73px;height:19px;text-align:center"></div>
<div class="gc" style="left:187px;top:475px;width:33px;height:19px;text-align:center"></div>
<div class="gc" style="left:221px;top:475px;width:20px;height:19px;text-align:center"></div>
<div class="gc" style="left:243px;top:475px;width:33px;height:19px;text-align:center"></div>
<div class="gc" style="left:277px;top:475px;width:33px;height:19px;text-align:center"></div>
<div class="gc" style="left:311px;top:475px;width:33px;height:19px;text-align:center"></div>
<div class="gc" style="left:345px;top:475px;width:62px;height:19px;text-align:center"></div>
<div class="gc" style="left:408px;top:475px;width:227px;height:19px;text-align:left;padding-left:3px"></div>
<div class="gc" style="left:636px;top:475px;width:68px;height:19px;text-align:center"></div>
<div class="gc" style="left:706px;top:475px;width:81px;height:19px;text-align:right;padding-right:0.6px"></div>
<div class="gc" style="left:789px;top:475px;width:80px;height:19px;text-align:right;padding-right:0.6px"></div>
<div class="gc" style="left:872px;top:475px;width:79px;height:19px;text-align:right;padding-right:0.6px"></div>
<div class="gc" style="left:954px;top:475px;width:19px;height:19px;text-align:center"></div>
<div style="left:976px;top:475px;width:16px;height:19px;background:#fff"></div>
<div class="cb0" style="left:976px;top:478px;width:11px;height:11px;"></div>
<div class="gc" style="left:44px;top:494px;width:33px;height:18px;text-align:center"></div>
<div class="gc" style="left:77px;top:494px;width:34px;height:18px;text-align:center"></div>
<div class="gc" style="left:112px;top:494px;width:73px;height:18px;text-align:center"></div>
<div class="gc" style="left:187px;top:494px;width:33px;height:18px;text-align:center"></div>
<div class="gc" style="left:221px;top:494px;width:20px;height:18px;text-align:center"></div>
<div class="gc" style="left:243px;top:494px;width:33px;height:18px;text-align:center"></div>
<div class="gc" style="left:277px;top:494px;width:33px;height:18px;text-align:center"></div>
<div class="gc" style="left:311px;top:494px;width:33px;height:18px;text-align:center"></div>
<div class="gc" style="left:345px;top:494px;width:62px;height:18px;text-align:center"></div>
<div class="gc" style="left:408px;top:494px;width:227px;height:18px;text-align:left;padding-left:3px"></div>
<div class="gc" style="left:636px;top:494px;width:68px;height:18px;text-align:center"></div>
<div class="gc" style="left:706px;top:494px;width:81px;height:18px;text-align:right;padding-right:0.6px"></div>
<div class="gc" style="left:789px;top:494px;width:80px;height:18px;text-align:right;padding-right:0.6px"></div>
<div class="gc" style="left:872px;top:494px;width:79px;height:18px;text-align:right;padding-right:0.6px"></div>
<div class="gc" style="left:954px;top:494px;width:19px;height:18px;text-align:center"></div>
<div style="left:976px;top:494px;width:16px;height:18px;background:#fff"></div>
<div class="cb0" style="left:976px;top:497px;width:11px;height:11px;"></div>
<div class="gc" style="left:44px;top:512px;width:33px;height:19px;text-align:center"></div>
<div class="gc" style="left:77px;top:512px;width:34px;height:19px;text-align:center"></div>
<div class="gc" style="left:112px;top:512px;width:73px;height:19px;text-align:center"></div>
<div class="gc" style="left:187px;top:512px;width:33px;height:19px;text-align:center"></div>
<div class="gc" style="left:221px;top:512px;width:20px;height:19px;text-align:center"></div>
<div class="gc" style="left:243px;top:512px;width:33px;height:19px;text-align:center"></div>
<div class="gc" style="left:277px;top:512px;width:33px;height:19px;text-align:center"></div>
<div class="gc" style="left:311px;top:512px;width:33px;height:19px;text-align:center"></div>
<div class="gc" style="left:345px;top:512px;width:62px;height:19px;text-align:center"></div>
<div class="gc" style="left:408px;top:512px;width:227px;height:19px;text-align:left;padding-left:3px"></div>
<div class="gc" style="left:636px;top:512px;width:68px;height:19px;text-align:center"></div>
<div class="gc" style="left:706px;top:512px;width:81px;height:19px;text-align:right;padding-right:0.6px"></div>
<div class="gc" style="left:789px;top:512px;width:80px;height:19px;text-align:right;padding-right:0.6px"></div>
<div class="gc" style="left:872px;top:512px;width:79px;height:19px;text-align:right;padding-right:0.6px"></div>
<div class="gc" style="left:954px;top:512px;width:19px;height:19px;text-align:center"></div>
<div style="left:976px;top:512px;width:16px;height:19px;background:#fff"></div>
<div class="cb0" style="left:976px;top:515px;width:11px;height:11px;"></div>
<div class="gc" style="left:44px;top:531px;width:33px;height:19px;text-align:center"></div>
<div class="gc" style="left:77px;top:531px;width:34px;height:19px;text-align:center"></div>
<div class="gc" style="left:112px;top:531px;width:73px;height:19px;text-align:center"></div>
<div class="gc" style="left:187px;top:531px;width:33px;height:19px;text-align:center"></div>
<div class="gc" style="left:221px;top:531px;width:20px;height:19px;text-align:center"></div>
<div class="gc" style="left:243px;top:531px;width:33px;height:19px;text-align:center"></div>
<div class="gc" style="left:277px;top:531px;width:33px;height:19px;text-align:center"></div>
<div class="gc" style="left:311px;top:531px;width:33px;height:19px;text-align:center"></div>
<div class="gc" style="left:345px;top:531px;width:62px;height:19px;text-align:center"></div>
<div class="gc" style="left:408px;top:531px;width:227px;height:19px;text-align:left;padding-left:3px"></div>
<div class="gc" style="left:636px;top:531px;width:68px;height:19px;text-align:center"></div>
<div class="gc" style="left:706px;top:531px;width:81px;height:19px;text-align:right;padding-right:0.6px"></div>
<div class="gc" style="left:789px;top:531px;width:80px;height:19px;text-align:right;padding-right:0.6px"></div>
<div class="gc" style="left:872px;top:531px;width:79px;height:19px;text-align:right;padding-right:0.6px"></div>
<div class="gc" style="left:954px;top:531px;width:19px;height:19px;text-align:center"></div>
<div style="left:976px;top:531px;width:16px;height:19px;background:#fff"></div>
<div class="cb0" style="left:976px;top:534px;width:11px;height:11px;"></div>
<div class="gc" style="left:44px;top:550px;width:33px;height:18px;text-align:center"></div>
<div class="gc" style="left:77px;top:550px;width:34px;height:18px;text-align:center"></div>
<div class="gc" style="left:112px;top:550px;width:73px;height:18px;text-align:center"></div>
<div class="gc" style="left:187px;top:550px;width:33px;height:18px;text-align:center"></div>
<div class="gc" style="left:221px;top:550px;width:20px;height:18px;text-align:center"></div>
<div class="gc" style="left:243px;top:550px;width:33px;height:18px;text-align:center"></div>
<div class="gc" style="left:277px;top:550px;width:33px;height:18px;text-align:center"></div>
<div class="gc" style="left:311px;top:550px;width:33px;height:18px;text-align:center"></div>
<div class="gc" style="left:345px;top:550px;width:62px;height:18px;text-align:center"></div>
<div class="gc" style="left:408px;top:550px;width:227px;height:18px;text-align:left;padding-left:3px"></div>
<div class="gc" style="left:636px;top:550px;width:68px;height:18px;text-align:center"></div>
<div class="gc" style="left:706px;top:550px;width:81px;height:18px;text-align:right;padding-right:0.6px"></div>
<div class="gc" style="left:789px;top:550px;width:80px;height:18px;text-align:right;padding-right:0.6px"></div>
<div class="gc" style="left:872px;top:550px;width:79px;height:18px;text-align:right;padding-right:0.6px"></div>
<div class="gc" style="left:954px;top:550px;width:19px;height:18px;text-align:center"></div>
<div style="left:976px;top:550px;width:16px;height:18px;background:#fff"></div>
<div class="cb0" style="left:976px;top:553px;width:11px;height:11px;"></div>
<div style="left:976px;top:250px;width:15px;height:18px;background:#ffffc0"></div>
<div class="cb" style="left:976px;top:253px;width:11px;height:11px;"><svg width="9" height="9" style="position:absolute;left:0;top:0"><path d="M1.3 4.2 L3.6 6.8 L8 1.6" fill="none" stroke="#000" stroke-width="2"/></svg></div>
<div style="left:28px;top:280px;width:13px;height:280px;background:#e6eaf2"></div>
<div style="left:27px;top:271px;width:15px;height:14px;background:#e8ecf4;border:1px solid #c4d6ec;border-radius:7px 7px 2px 2px"><div style="left:3px;top:4px;border-left:4px solid transparent;border-right:4px solid transparent;border-bottom:4px solid #707888"></div></div>
<div style="left:27px;top:553px;width:15px;height:14px;background:#e8ecf4;border:1px solid #c4d6ec;border-radius:2px 2px 7px 7px"><div style="left:3px;top:4px;border-left:4px solid transparent;border-right:4px solid transparent;border-top:4px solid #707888"></div></div>
<div class="l" style="left:-62px;top:570px;width:150px;height:16px;">Empresa</div>
<div class="fy" style="left:92px;top:568px;width:307px;height:19px;text-align:left;padding-left:3px;color:#8090c0;padding-left:2px;letter-spacing:0">DENVER TECNOLOGIA LTDA.</div>
<div class="l" style="left:295px;top:570px;width:150px;height:16px;">Emissao</div>
<div class="fy" style="left:449px;top:568px;width:69px;height:19px;text-align:center;">05/03/2024</div>
<div class="l" style="left:419px;top:570px;width:150px;height:16px;">Vlr. Titulo</div>
<div class="fy" style="left:574px;top:568px;width:94px;height:19px;text-align:right;padding-right:1px;">3,250.00</div>
<div class="l" style="left:551px;top:571px;width:150px;height:16px;">Total</div>
<div class="fy" style="left:706px;top:568px;width:81px;height:19px;text-align:right;padding-right:1px;">0.00</div>
<div class="fy" style="left:789px;top:568px;width:80px;height:19px;text-align:right;padding-right:1px;">0.00</div>
<div class="fy" style="left:872px;top:568px;width:80px;height:19px;text-align:right;padding-right:1px;">23,793.94</div>
<div class="l" style="left:-62px;top:590px;width:150px;height:16px;">Quadra / Lote</div>
<div class="fy" style="left:92px;top:588px;width:39px;height:19px;text-align:center;"></div>
<div class="fy" style="left:133px;top:588px;width:39px;height:19px;text-align:center;"></div>
<div class="l" style="left:67px;top:590px;width:150px;height:16px;">Banco</div>
<div class="fy" style="left:221px;top:588px;width:38px;height:19px;text-align:center;"></div>
<div class="l" style="left:271px;top:590px;width:150px;height:16px;">Saldo Valor Ident</div>
<div class="fy" style="left:425px;top:588px;width:94px;height:19px;text-align:center;"></div>
<div class="l" style="left:419px;top:590px;width:150px;height:16px;">Vlr. Pago</div>
<div class="fy" style="left:574px;top:588px;width:94px;height:19px;text-align:right;padding-right:1px;">0.00</div>
<div class="l" style="left:670px;top:590px;width:150px;height:16px;">Total Sel.</div>
<div class="fy" style="left:824px;top:588px;width:83px;height:19px;text-align:right;padding-right:1px;">23,793.94</div>
<div class="fy" style="left:909px;top:588px;width:43px;height:19px;text-align:right;padding-right:1px;">2</div>
<div style="left:964px;top:576px;width:24px;height:25px;border:1px solid #c0d4ec;border-radius:3px"><svg width="17" height="17" style="position:absolute;left:3px;top:3px" shape-rendering="crispEdges"><rect x="0" y="0" width="16" height="16" fill="#0000ff"/><rect x="3" y="1" width="10" height="6" fill="#fff"/><path d="M4 0.5h1M6 0.5h1M8 0.5h1M10 0.5h1M12 0.5h1" stroke="#000"/><rect x="1" y="3" width="1" height="1" fill="#000"/><rect x="4" y="10" width="8" height="5" fill="#888"/><rect x="5" y="11" width="2" height="3" fill="#0000ff"/><rect x="15" y="1" width="1" height="15" fill="#000"/><rect x="1" y="15" width="15" height="1" fill="#000"/><path d="M5 15.5h1M7 15.5h1M9 15.5h1M11 15.5h1" stroke="#fff"/></svg></div>
<div class="tab" style="left:5px;top:631px;width:102px;height:21px;">Baixa Cliente</div>
<div class="tab" style="left:109px;top:631px;width:102px;height:21px;">Consulta Grade</div>
<div class="tab" style="left:212px;top:631px;width:101px;height:21px;background:#b4d0e9;color:#000;border-radius:0 0 4px 4px">Baixar Titulos</div>
<div style="left:211px;top:630px;width:103px;height:25px;border:3px solid #f00000"></div>
<div class="tab" style="left:314px;top:631px;width:99px;height:21px;">Consulta Baixa</div>
<div class="tab" style="left:416px;top:631px;width:99px;height:21px;">Baixa Negociacao</div>
<div style="left:277px;top:271px;width:410px;height:159px;background:#e9edf5;border:1px solid #4a6890;border-radius:3px 3px 4px 4px"></div>
<div style="left:278px;top:272px;width:408px;height:20px;background:#2c83c4;border-radius:2px 2px 0 0"></div>
<div style="left:280px;top:273px;width:200px;height:20px;font-size:12.1px;line-height:20px;color:#fff">MSG_00009084 - Atencao</div>
<div style="left:670px;top:276px;width:13px;height:13px;background:#c8e0f4;border:1px solid #8ab0d8"><svg width="11" height="11" style="position:absolute;left:0;top:0"><path d="M2 2 L9 9 M9 2 L2 9" stroke="#2e7fc3" stroke-width="2.2"/></svg></div>
<div style="left:313px;top:325px;width:38px;height:34px;"><svg width="38" height="34"><path d="M18.5 1.5 L36 29 L1.5 29 Z" fill="#000" stroke="#000" stroke-width="1.6" stroke-linejoin="round" transform="translate(1.2,1.3)"/><path d="M18.5 1.5 L36 29 L1.5 29 Z" fill="#ffff00" stroke="#5a5a00" stroke-width="1.1" stroke-linejoin="round"/><path d="M16 11 Q16 9 18.5 9 Q21 9 21 11 L19.6 20.5 L17.4 20.5 Z" fill="#000"/><path d="M18.5 22.8 L21 25.4 L18.5 28 L16 25.4 Z" fill="#000"/></svg></div>
<div style="left:384px;top:325px;width:300px;height:16px;font-size:12.2px;line-height:16px;color:#303040">MSG_00002101 - Voce Realmente Deseja Baixar Os</div>
<div style="left:384px;top:341px;width:300px;height:16px;font-size:12.2px;line-height:16px;color:#303040">Titulos ?</div>
<div style="left:495px;top:393px;width:90px;height:25px;background:#d4e4f4;border:1px solid #a0a8b8;border-radius:12px 0 0 12px;font-size:12.2px;line-height:25px;padding-left:3px;text-align:center;color:#303040"><span style="text-decoration:underline">O</span>K</div>
<div style="left:585px;top:392px;width:91px;height:26px;background:#d4e4f4;border:1px solid #4a6890;border-radius:0 12px 12px 0;font-size:12.2px;line-height:25px;padding-right:5px;text-align:center;color:#303040"><div style="left:4px;top:2px;width:76px;height:20px;border-top:1px dotted #000;border-bottom:1px dotted #000"></div><span style="text-decoration:underline">C</span>ancela</div></body></html>
